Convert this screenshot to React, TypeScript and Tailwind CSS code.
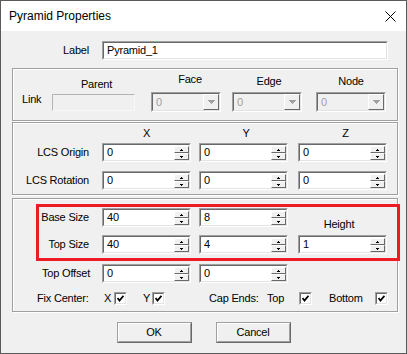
import React from 'react';

const sunkenOuter = 'border border-t-[#a0a0a0] border-l-[#a0a0a0] border-b-white border-r-white';
const sunkenInner = 'border border-t-[#696969] border-l-[#696969] border-b-[#e3e3e3] border-r-[#e3e3e3]';
const raised = 'border border-t-white border-l-white border-b-[#696969] border-r-[#696969]';

const Tri = ({ up }: { up?: boolean }) => (
    <svg width="3" height="2" viewBox="0 0 3 2" shapeRendering="crispEdges">
        {up ? (
            <>
                <rect x="1" y="0" width="1" height="1" fill="#000" />
                <rect x="0" y="1" width="3" height="1" fill="#000" />
            </>
        ) : (
            <>
                <rect x="0" y="0" width="3" height="1" fill="#000" />
                <rect x="1" y="1" width="1" height="1" fill="#000" />
            </>
        )}
    </svg>
);

const Spin = ({ value, className = '' }: { value: string; className?: string }) => (
    <div className={`h-[19px] w-[89px] flex shrink-0 ${sunkenOuter} ${className}`}>
        <div className={`flex-1 flex bg-white ${sunkenInner}`}>
            <span className="flex-1 pl-[3px] leading-[15px]">{value}</span>
            <div className="flex flex-col pt-[1px]">
                <div className={`h-[7px] w-[15px] flex items-center justify-center bg-[#f0f0f0] ${raised}`}>
                    <Tri up />
                </div>
                <div className={`h-[7px] w-[15px] flex items-center justify-center bg-[#f0f0f0] ${raised}`}>
                    <Tri />
                </div>
            </div>
        </div>
    </div>
);

const Combo = () => (
    <div className={`h-[20px] w-[70px] flex ${sunkenOuter}`}>
        <div className={`flex-1 flex bg-[#f0f0f0] ${sunkenInner}`}>
            <span className="flex-1 pl-[3px] leading-[16px] text-[#a0a0a0]">0</span>
            <div className={`w-[16px] flex items-center justify-center bg-[#f0f0f0] ${raised}`}>
                <svg width="7" height="4" viewBox="0 0 7 4" shapeRendering="crispEdges">
                    <polygon points="0,0 7,0 3.5,4" fill="#a0a0a0" />
                </svg>
            </div>
        </div>
    </div>
);

const Check = () => (
    <div className={`h-[13px] w-[13px] shrink-0 flex ${sunkenOuter}`}>
        <div className={`flex-1 bg-white flex items-center justify-center ${sunkenInner}`}>
            <svg width="7" height="7" viewBox="0 0 7 7">
                <polyline points="0.5,3 2.5,5.5 6.5,0.8" fill="none" stroke="#000" strokeWidth="1.8" />
            </svg>
        </div>
    </div>
);

const groupBox = 'border border-[#a0a0a0] shadow-[inset_1px_1px_0_#fff,1px_1px_0_#fff]';

const Button = ({ label }: { label: string }) => (
    <div className="h-[21px] w-[75px] flex border border-t-[#a0a0a0] border-l-[#a0a0a0] border-b-[#696969] border-r-[#696969]">
        <div className="flex-1 flex items-center justify-center border border-t-white border-l-white border-b-[#a0a0a0] border-r-[#a0a0a0] bg-[#f0f0f0]">
            {label}
        </div>
    </div>
);

export default function App() {
    return (
        <div className="w-[407px] h-[354px] border border-[#5a5a5a] bg-[#f0f0f0] flex flex-col font-['Liberation_Sans',Arial,sans-serif] text-[11px] tracking-[-0.2px] text-black overflow-hidden">
            {/* title bar */}
            <div className="h-[30px] bg-white flex items-center shrink-0">
                <span className="pl-[8px] text-[12px] tracking-normal">Pyramid Properties</span>
                <svg className="ml-auto mr-[10px]" width="11" height="11" viewBox="0 0 11 11">
                    <path d="M0.5 0.5 L10.5 10.5 M10.5 0.5 L0.5 10.5" stroke="#000" strokeWidth="1" />
                </svg>
            </div>

            {/* label row */}
            <div className="mt-[10px] h-[19px] flex items-center">
                <span className="w-[88px] text-right">Label</span>
                <div className={`ml-[13px] h-[19px] w-[286px] flex ${sunkenOuter}`}>
                    <div className={`flex-1 bg-white pl-[3px] leading-[15px] ${sunkenInner}`}>Pyramid_1</div>
                </div>
            </div>

            {/* link group */}
            <div className={`mt-[8px] ml-[11px] w-[386px] h-[53px] shrink-0 flex items-start ${groupBox}`}>
                <span className="ml-[9px] mt-[24px] w-[30px] leading-[13px]">Link</span>
                <div className="w-[83px] flex flex-col items-center">
                    <span className="mt-[9px] ml-[6px] leading-[13px]">Parent</span>
                    <div className="mt-[3px] h-[17px] w-[83px] border border-t-[#b4b4b4] border-l-[#b4b4b4] border-b-[#f8f8f8] border-r-[#f8f8f8] bg-[#f0f0f0]" />
                </div>
                <div className="ml-[16px] w-[70px] flex flex-col items-center">
                    <span className="mt-[4px] ml-[8px] leading-[13px]">Face</span>
                    <div className="mt-[6px]"><Combo /></div>
                </div>
                <div className="ml-[11px] w-[70px] flex flex-col items-center">
                    <span className="mt-[6px] ml-[4px] leading-[13px]">Edge</span>
                    <div className="mt-[4px]"><Combo /></div>
                </div>
                <div className="ml-[14px] w-[70px] flex flex-col items-center">
                    <span className="mt-[6px] leading-[13px]">Node</span>
                    <div className="mt-[4px]"><Combo /></div>
                </div>
            </div>

            {/* LCS group */}
            <div className={`mt-[1px] ml-[11px] w-[386px] h-[73px] shrink-0 flex flex-col ${groupBox}`}>
                <div className="mt-[4px] h-[13px] flex leading-[13px]">
                    <div className="w-[89px]" />
                    <span className="w-[89px] text-center">X</span>
                    <span className="ml-[8px] w-[89px] text-center pl-[5px]">Y</span>
                    <span className="ml-[10px] w-[89px] text-center pl-[6px]">Z</span>
                </div>
                <div className="mt-[3px] h-[19px] flex items-center">
                    <span className="w-[76px] text-right">LCS Origin</span>
                    <Spin value="0" className="ml-[13px]" />
                    <Spin value="0" className="ml-[8px]" />
                    <Spin value="0" className="ml-[10px]" />
                </div>
                <div className="mt-[9px] h-[19px] flex items-center">
                    <span className="w-[76px] text-right">LCS Rotation</span>
                    <Spin value="0" className="ml-[13px]" />
                    <Spin value="0" className="ml-[8px]" />
                    <Spin value="0" className="ml-[10px]" />
                </div>
            </div>

            {/* size group */}
            <div className={`relative mt-[3px] ml-[11px] w-[386px] h-[114px] shrink-0 flex flex-col ${groupBox}`}>
                <div className="mt-[9px] h-[19px] flex items-start">
                    <span className="w-[76px] text-right leading-[19px]">Base Size</span>
                    <Spin value="40" className="ml-[13px]" />
                    <Spin value="8" className="ml-[8px]" />
                    <span className="ml-[10px] w-[89px] mt-[10px] pr-[7px] text-center leading-[13px]">Height</span>
                </div>
                <div className="mt-[8px] h-[19px] flex items-center">
                    <span className="w-[76px] text-right">Top Size</span>
                    <Spin value="40" className="ml-[13px]" />
                    <Spin value="4" className="ml-[8px]" />
                    <Spin value="1" className="ml-[10px]" />
                </div>
                <div className="mt-[10px] h-[19px] flex items-center">
                    <span className="w-[77px] text-right">Top Offset</span>
                    <Spin value="0" className="ml-[12px]" />
                    <Spin value="0" className="ml-[8px]" />
                </div>
                <div className="mt-[9px] h-[13px] flex items-center">
                    <span className="ml-[24px] w-[67px]">Fix Center:</span>
                    <span className="w-[10px]">X</span>
                    <Check />
                    <span className="ml-[16px] w-[9px]">Y</span>
                    <Check />
                    <span className="ml-[44px] w-[58px]">Cap Ends:</span>
                    <span className="w-[32px]">Top</span>
                    <Check />
                    <span className="ml-[17px] w-[46px]">Bottom</span>
                    <Check />
                </div>
                <div className="absolute left-[23px] top-[5px] w-[364px] h-[57px] border-[3px] border-[#ed1c24]" />
            </div>

            {/* buttons */}
            <div className="mt-[10px] flex justify-center gap-[24px]">
                <Button label="OK" />
                <Button label="Cancel" />
            </div>
        </div>
    );
}
